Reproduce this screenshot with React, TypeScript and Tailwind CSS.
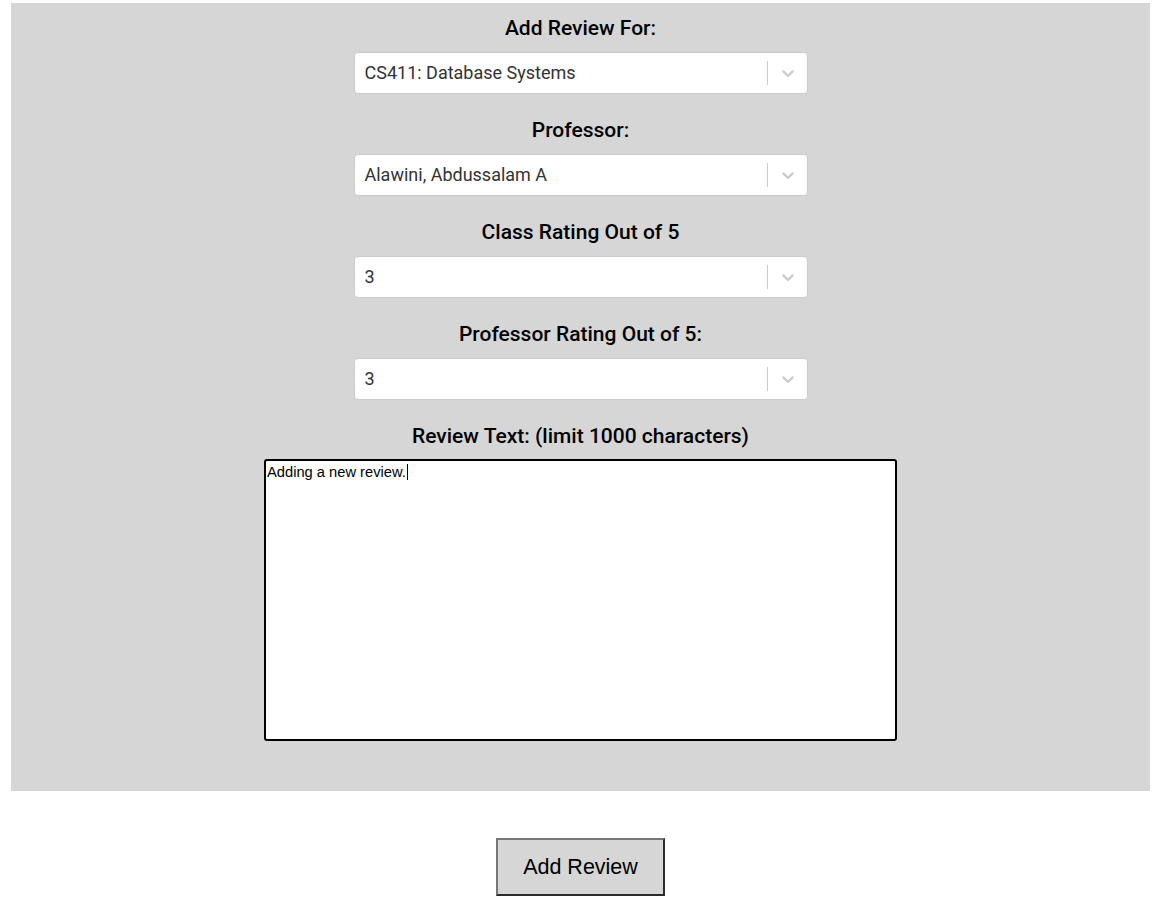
import React from "react";

function Chevron() {
  return (
    <svg width="20" height="20" viewBox="0 0 20 20" fill="#cccccc" aria-hidden="true">
      <path d="M4.516 7.548c0.436-0.446 1.043-0.481 1.576 0l3.908 3.747 3.908-3.747c0.533-0.481 1.141-0.446 1.574 0 0.436 0.445 0.408 1.197 0 1.615-0.406 0.418-4.695 4.502-4.695 4.502-0.217 0.223-0.502 0.335-0.787 0.335s-0.57-0.112-0.789-0.335c0 0-4.287-4.084-4.695-4.502s-0.436-1.17 0-1.615z" />
    </svg>
  );
}

function Select({ value }: { value: string }) {
  return (
    <div className="flex h-[42px] w-[454px] items-center rounded-[4px] border border-[#cccccc] bg-white">
      <div className="flex-1 truncate pb-[2px] pl-[10px] text-[18px] text-[#333333]">{value}</div>
      <div className="flex items-center self-stretch">
        <span className="my-[8px] w-px self-stretch bg-[#cccccc]" />
        <span className="flex items-center pl-[10px] pr-[9px]">
          <Chevron />
        </span>
      </div>
    </div>
  );
}

function Label({ children }: { children: React.ReactNode }) {
  return (
    <div className="flex h-[24px] items-center justify-center text-[21px] font-medium leading-[24px] text-black">
      {children}
    </div>
  );
}

export default function App() {
  return (
    <div className="min-h-[898px] bg-white" style={{ fontFamily: "Roboto, 'Liberation Sans', sans-serif" }}>
      <div className="ml-[11px] mr-[8px] pt-[3px]">
        <div className="flex flex-col items-center bg-[#d6d6d6] pb-[50px] pt-[13px]">
          <Label>Add Review For:</Label>
          <div className="mt-[12px]">
            <Select value="CS411: Database Systems" />
          </div>
          <div className="mt-[24px]">
            <Label>Professor:</Label>
          </div>
          <div className="mt-[12px]">
            <Select value="Alawini, Abdussalam A" />
          </div>
          <div className="mt-[24px]">
            <Label>Class Rating Out of 5</Label>
          </div>
          <div className="mt-[12px]">
            <Select value="3" />
          </div>
          <div className="mt-[24px]">
            <Label>Professor Rating Out of 5:</Label>
          </div>
          <div className="mt-[12px]">
            <Select value="3" />
          </div>
          <div className="mt-[24px]">
            <Label>Review Text: (limit 1000 characters)</Label>
          </div>
          <div className="mt-[11px]">
            <div
              className="h-[282px] w-[633px] rounded-[3px] border-2 border-black bg-white px-[1px] pt-0 text-[14.7px] leading-[18px] text-black"
              style={{ fontFamily: "'Liberation Sans', Arial, sans-serif" }}
            >
              Adding a new review.<span className="ml-[1px] inline-block h-[16px] w-px translate-y-[3px] bg-black align-baseline" />
            </div>
          </div>
        </div>
      </div>
      <div className="mt-[47px] flex justify-center">
        <div
          className="ml-[3px] flex h-[58px] w-[169px] items-center justify-center border-2 border-b-[#2b2b2b] border-l-[#767676] border-r-[#2b2b2b] border-t-[#767676] bg-[#d6d6d6] text-[21.5px] text-black"
          style={{ fontFamily: "'Liberation Sans', Arial, sans-serif" }}
        >
          Add Review
        </div>
      </div>
    </div>
  );
}
